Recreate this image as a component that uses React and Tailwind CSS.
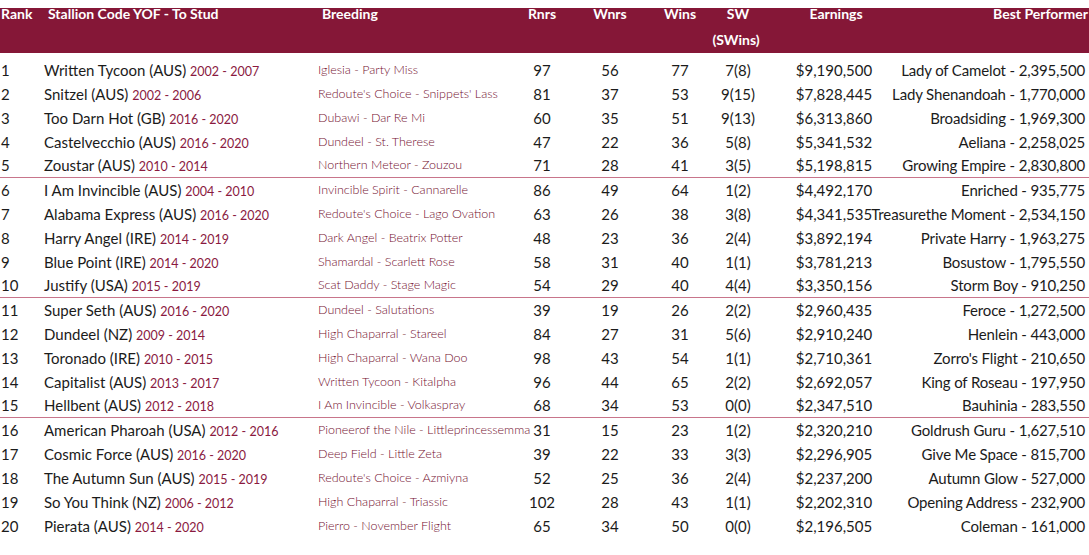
import React from "react"

const rows = [
  ["1", "Written Tycoon (AUS)", "2002 - 2007", "Iglesia - Party Miss", "97", "56", "77", "7(8)", "$9,190,500", "Lady of Camelot - 2,395,500"],
  ["2", "Snitzel (AUS)", "2002 - 2006", "Redoute's Choice - Snippets' Lass", "81", "37", "53", "9(15)", "$7,828,445", "Lady Shenandoah - 1,770,000"],
  ["3", "Too Darn Hot (GB)", "2016 - 2020", "Dubawi - Dar Re Mi", "60", "35", "51", "9(13)", "$6,313,860", "Broadsiding - 1,969,300"],
  ["4", "Castelvecchio (AUS)", "2016 - 2020", "Dundeel - St. Therese", "47", "22", "36", "5(8)", "$5,341,532", "Aeliana - 2,258,025"],
  ["5", "Zoustar (AUS)", "2010 - 2014", "Northern Meteor - Zouzou", "71", "28", "41", "3(5)", "$5,198,815", "Growing Empire - 2,830,800"],
  ["6", "I Am Invincible (AUS)", "2004 - 2010", "Invincible Spirit - Cannarelle", "86", "49", "64", "1(2)", "$4,492,170", "Enriched - 935,775"],
  ["7", "Alabama Express (AUS)", "2016 - 2020", "Redoute's Choice - Lago Ovation", "63", "26", "38", "3(8)", "$4,341,535", "Treasurethe Moment - 2,534,150"],
  ["8", "Harry Angel (IRE)", "2014 - 2019", "Dark Angel - Beatrix Potter", "48", "23", "36", "2(4)", "$3,892,194", "Private Harry - 1,963,275"],
  ["9", "Blue Point (IRE)", "2014 - 2020", "Shamardal - Scarlett Rose", "58", "31", "40", "1(1)", "$3,781,213", "Bosustow - 1,795,550"],
  ["10", "Justify (USA)", "2015 - 2019", "Scat Daddy - Stage Magic", "54", "29", "40", "4(4)", "$3,350,156", "Storm Boy - 910,250"],
  ["11", "Super Seth (AUS)", "2016 - 2020", "Dundeel - Salutations", "39", "19", "26", "2(2)", "$2,960,435", "Feroce - 1,272,500"],
  ["12", "Dundeel (NZ)", "2009 - 2014", "High Chaparral - Stareel", "84", "27", "31", "5(6)", "$2,910,240", "Henlein - 443,000"],
  ["13", "Toronado (IRE)", "2010 - 2015", "High Chaparral - Wana Doo", "98", "43", "54", "1(1)", "$2,710,361", "Zorro's Flight - 210,650"],
  ["14", "Capitalist (AUS)", "2013 - 2017", "Written Tycoon - Kitalpha", "96", "44", "65", "2(2)", "$2,692,057", "King of Roseau - 197,950"],
  ["15", "Hellbent (AUS)", "2012 - 2018", "I Am Invincible - Volkaspray", "68", "34", "53", "0(0)", "$2,347,510", "Bauhinia - 283,550"],
  ["16", "American Pharoah (USA)", "2012 - 2016", "Pioneerof the Nile - Littleprincessemma", "31", "15", "23", "1(2)", "$2,320,210", "Goldrush Guru - 1,627,510"],
  ["17", "Cosmic Force (AUS)", "2016 - 2020", "Deep Field - Little Zeta", "39", "22", "33", "3(3)", "$2,296,905", "Give Me Space - 815,700"],
  ["18", "The Autumn Sun (AUS)", "2015 - 2019", "Redoute's Choice - Azmiyna", "52", "25", "36", "2(4)", "$2,237,200", "Autumn Glow - 527,000"],
  ["19", "So You Think (NZ)", "2006 - 2012", "High Chaparral - Triassic", "102", "28", "43", "1(1)", "$2,202,310", "Opening Address - 232,900"],
  ["20", "Pierata (AUS)", "2014 - 2020", "Pierro - November Flight", "65", "34", "50", "0(0)", "$2,196,505", "Coleman - 161,000"],
]

function Header() {
  return (
    <div className="mt-2 flow-root h-[45px] bg-[#851737] text-[14px] font-bold leading-[26px] text-white">
      <div className="-mt-[7px] flex">
        <div className="w-[44px] shrink-0 pl-[1px]">Rank</div>
        <div className="w-[274px] shrink-0 pl-[4px]">Stallion Code YOF - To Stud</div>
        <div className="w-[194px] shrink-0 pl-[4px]">Breeding</div>
        <div className="w-[60px] shrink-0 text-center">Rnrs</div>
        <div className="w-[76px] shrink-0 text-center">Wnrs</div>
        <div className="w-[64px] shrink-0 text-center">Wins</div>
        <div className="w-[52px] shrink-0 whitespace-nowrap text-center">
          SW
          <br />
          <span className="-ml-[4px]">(SWins)</span>
        </div>
        <div className="w-[144px] shrink-0 text-center">Earnings</div>
        <div className="min-w-0 flex-1 pr-[1px] text-right">Best Performer</div>
      </div>
    </div>
  )
}

function Row({ r, line }) {
  return (
    <div
      className={
        "flex h-[24px] items-center whitespace-nowrap text-[15px] text-[#1b1b1b] " +
        (line ? "border-b border-[#c8758b]" : "")
      }
    >
      <div className="w-[44px] shrink-0 pl-[1px]">{r[0]}</div>
      <div className="w-[274px] shrink-0">
        {r[1]} <span className="text-[12.5px] text-[#8a1a3f]">{r[2]}</span>
      </div>
      <div className="w-[194px] shrink-0 text-[12.5px] font-light text-[#74102f]">{r[3]}</div>
      <div className="w-[60px] shrink-0 text-center">{r[4]}</div>
      <div className="w-[76px] shrink-0 text-center">{r[5]}</div>
      <div className="w-[64px] shrink-0 text-center">{r[6]}</div>
      <div className="w-[52px] shrink-0 text-center">{r[7]}</div>
      <div className="w-[140px] shrink-0 text-center">{r[8]}</div>
      <div className="flex min-w-0 flex-1 justify-end pr-[4px]">
        <span className="shrink-0 tracking-[-0.01em]">{r[9]}</span>
      </div>
    </div>
  )
}

export default function App() {
  return (
    <div className="h-[555px] w-[1089px] overflow-hidden bg-white font-['Lato',sans-serif]">
      <Header />
      <div className="mt-[5px]">
        {rows.map((r, i) => (
          <Row key={r[0]} r={r} line={i === 4 || i === 9 || i === 14} />
        ))}
      </div>
    </div>
  )
}
